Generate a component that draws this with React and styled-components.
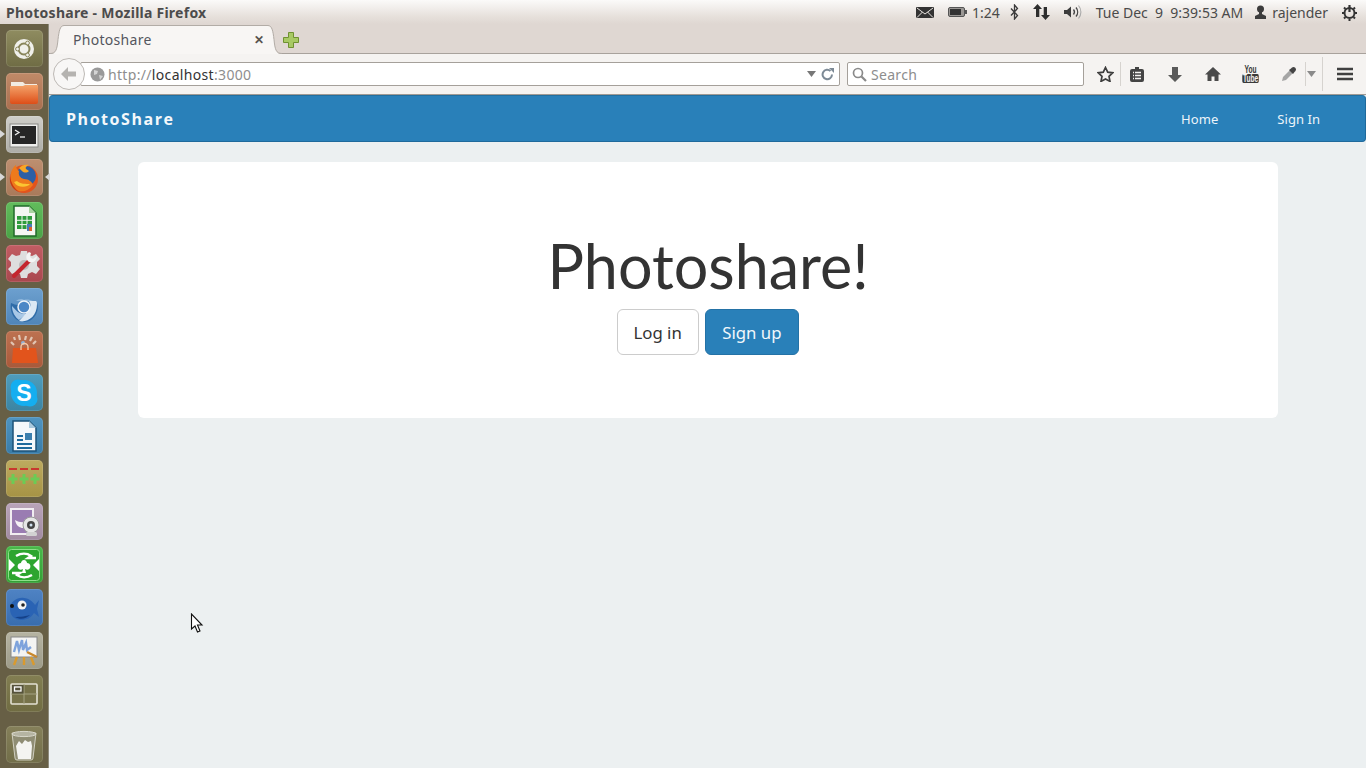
import React from 'react';
import styled, { createGlobalStyle } from 'styled-components';

const GlobalStyle = createGlobalStyle`
  html, body { margin: 0; padding: 0; height: 768px; overflow: hidden; background: #ecf0f1; }
  #root { height: 768px; }
  * { box-sizing: border-box; }
`;

const Screen = styled.div`
  position: relative;
  width: 1366px;
  height: 768px;
  display: grid;
  grid-template-columns: 49px 1fr;
  grid-template-rows: 24px 1fr;
  overflow: hidden;
  font-family: "Open Sans", "Noto Sans", sans-serif;
`;

// Top panel
const TopPanel = styled.header`
  grid-column: span 2;
  display: flex;
  align-items: center;
  justify-content: space-between;
  padding: 0 8px 0 6px;
  background: linear-gradient(#fbfaf9, #e6e0db 70%, #dfd7d2);
  color: #4c4c4c;
`;

const WindowTitle = styled.div`
  font: bold 14px "Noto Sans", sans-serif;
  letter-spacing: 0.25px;
`;

const Indicators = styled.div`
  display: flex;
  align-items: center;
  font: 14px "Noto Sans", sans-serif;
  color: #4a4a4a;
`;

const Indicator = styled.span`
  display: flex;
  align-items: center;
  margin-left: ${({ $gap }) => $gap}px;
  white-space: nowrap;
`;

// Launcher
const Launcher = styled.nav`
  display: flex;
  flex-direction: column;
  align-items: center;
  gap: 6px;
  padding: 6px 6px 0 6px;
  background: #675f45;
  border-right: 1px solid #8d8a7b;
`;

const Tile = styled.div`
  position: relative;
  flex: none;
  width: 37px;
  height: 37px;
  margin-top: ${({ $push }) => $push || 0}px;
  border-radius: 5px;
  background: linear-gradient(${({ $color }) => $color}, ${({ $shade }) => $shade});
  box-shadow: inset 0 0 0 1px rgba(255, 255, 255, 0.12);
  display: flex;
  align-items: center;
  justify-content: center;
`;

const Pip = styled.span`
  position: absolute;
  top: 14px;
  ${({ $side }) => ($side === 'left' ? 'left: -6px;' : 'right: -7px;')}
  width: 0;
  height: 0;
  border-top: 4px solid transparent;
  border-bottom: 4px solid transparent;
  ${({ $side }) => ($side === 'left' ? 'border-left: 5px solid #d8d8d8;' : 'border-right: 5px solid #d8d8d8;')}
`;

const TileSvg = styled.svg`
  width: 34px;
  height: 34px;
  display: block;
`;

const launcherItems = [
  {
    color: '#8f8c60', shade: '#6f6c44',
    art: (
      <>
        <circle cx="17" cy="17" r="10" fill="#f0f0ea" />
        <circle cx="17" cy="17" r="5.500" fill="none" stroke="#88855a" strokeWidth="2" />
        <circle cx="10.500" cy="17" r="1.900" fill="#f0f0ea" stroke="#88855a" />
        <circle cx="20.500" cy="11" r="1.900" fill="#f0f0ea" stroke="#88855a" />
        <circle cx="20.500" cy="23" r="1.900" fill="#f0f0ea" stroke="#88855a" />
      </>
    ),
  },
  {
    color: '#c08a68', shade: '#a96f4f',
    art: (
      <>
        <path d="M4 7h12l2 2h12v5H4z" fill="#f3ece2" />
        <path d="M3 11h13l2-1h13v17a2 2 0 0 1-2 2H5a2 2 0 0 1-2-2z" fill="url(#folder)" />
        <defs>
          <linearGradient id="folder" x1="0" y1="0" x2="0" y2="1">
            <stop offset="0" stopColor="#f4a36a" />
            <stop offset="1" stopColor="#dd4e18" />
          </linearGradient>
        </defs>
      </>
    ),
  },
  {
    color: '#cfcec9', shade: '#aeada7', left: true,
    art: (
      <>
        <rect x="3" y="6" width="28" height="23" fill="#eeeeec" stroke="#8a8a86" />
        <rect x="5" y="8" width="24" height="18" fill="#262626" />
        <path d="M8 12l4 2.500-4 2.500" fill="none" stroke="#eee" strokeWidth="1.300" />
        <path d="M13 19h5" stroke="#eee" strokeWidth="1.300" />
      </>
    ),
  },
  {
    color: '#bd8f70', shade: '#a97a5a', left: true, right: true,
    art: (
      <>
        <circle cx="17" cy="18" r="14" fill="#e2531c" />
        <circle cx="19" cy="15" r="10" fill="#2c5fa6" />
        <path d="M12 7c3-3 6-4 10-3-3 1-4 3-3 4l3 2c-2 2-5 2-7 0z" fill="#f7a626" />
        <path d="M4 13c0-3 2-7 5-9 0 3 1 5 3 6-1 4 1 7 5 8 5 0 8 3 9 6-5 7-13 8-18 4C4 25 3 19 4 13z" fill="#ee7a1c" />
        <path d="M10 20c3 3 9 3 13 3-3 4-13 4-16-2z" fill="#fbc531" />
        <path d="M3 15c-1 7 2 13 9 16-5-4-8-9-9-16z" fill="#c93a14" />
      </>
    ),
  },
  {
    color: '#62bc5c', shade: '#4aa246',
    art: (
      <>
        <path d="M7 2h15l7 7v23H7z" fill="#f4f7f2" stroke="#1f6b2a" strokeWidth="1.500" />
        <path d="M22 2v7h7z" fill="#a8d4a0" />
        <rect x="10" y="12" width="15" height="13" fill="#2e9b3c" />
        <path d="M10 16.300h15M10 20.600h15M15 12v13M20 12v13" stroke="#f4f7f2" strokeWidth="1" />
        <rect x="20" y="20" width="5" height="7" fill="#4a7ab8" />
        <rect x="22" y="23" width="3" height="4" fill="#d9622b" />
      </>
    ),
  },
  {
    color: '#c25d63', shade: '#a9474e',
    art: (
      <>
        <path d="M14 4h6l1 4 4 1 4-2 4 5-3 3v4l3 3-4 5-4-2-4 2-1 4h-6l-1-4-4-2-4 2-4-5 3-3v-4L1 12l4-5 4 2 4-1z" fill="#dedede" />
        <circle cx="17" cy="18" r="5" fill="#bcbcbc" />
        <path d="M7 29L23 13" stroke="#c4262e" strokeWidth="4" strokeLinecap="round" />
        <path d="M22 5a6 6 0 0 0 0 10 6 6 0 0 0 8-6l-4 3-3-2 1-4z" fill="#f4f4f4" />
      </>
    ),
  },
  {
    color: '#6da0cf', shade: '#4f85b8',
    art: (
      <>
        <path d="M4 13c6 3 9 2 13 0h13c3 8-3 19-13 19C9 32 2 24 4 13z" fill="#2f6ca8" />
        <path d="M12 30c-4-3-7-8-7-14 3 3 5 6 8 7 3 2 7 1 9-1z" fill="#a8c8e6" />
        <path d="M12 31c8 2 18-4 18-17 0-1 0-2-1-3h-7c2 3 2 6 0 9z" fill="#dbe8f4" />
        <path d="M9 11c2-2 6-3 8-1 3-1 7 0 9 1H14z" fill="#8fb7dc" />
        <circle cx="17" cy="17" r="6" fill="#4b87c6" stroke="#edf3f9" strokeWidth="1.500" />
      </>
    ),
  },
  {
    color: '#bd7251', shade: '#a8593a',
    art: (
      <>
        <path d="M7 4l1 3M12 2l1 5M19 3l-1 4M25 4l-2 4M29 8l-3 3M4 9l3 3" stroke="#ecdccd" strokeWidth="2.200" opacity="0.8" />
        <circle cx="16" cy="10" r="2" fill="#8fb4d8" />
        <path d="M6 15h23l2 15H5z" fill="#e2541c" />
        <path d="M14 17v-3a3.500 3.500 0 0 1 7 0v3" fill="none" stroke="#f7c9a5" strokeWidth="1.300" />
      </>
    ),
  },
  {
    color: '#4f9dbc', shade: '#3b84a2',
    art: (
      <>
        <circle cx="11" cy="11" r="7.500" fill="#15aef0" />
        <circle cx="23" cy="23" r="7.500" fill="#15aef0" />
        <circle cx="17" cy="17" r="13" fill="#15aef0" />
        <text x="17" y="25" textAnchor="middle" fontFamily="Liberation Sans" fontWeight="bold" fontSize="23" fill="#fff">S</text>
      </>
    ),
  },
  {
    color: '#4f94c0', shade: '#397ca8',
    art: (
      <>
        <path d="M6 2h16l7 7v23H6z" fill="#f5f8fb" stroke="#1d5278" strokeWidth="1.500" />
        <path d="M22 2v7h7z" fill="#a9c9de" />
        <path d="M10 17h6M10 21h6M10 25h15M10 29h15" stroke="#1f6a9c" strokeWidth="2" />
        <rect x="18" y="14" width="7" height="7" fill="#3c7fae" />
      </>
    ),
  },
  {
    color: '#bdaa5f', shade: '#a69345',
    art: (
      <>
        <path d="M2 7h8M13 7h8M24 7h8" stroke="#c8372e" strokeWidth="2.200" />
        <path d="M6 12v10M1.500 17h9M17 12v10M12.500 17h9M28 12v10M23.500 17h9" stroke="#6ccb55" strokeWidth="3" />
      </>
    ),
  },
  {
    color: '#b9a4b9', shade: '#a18ba1',
    art: (
      <>
        <rect x="3" y="3" width="24" height="27" fill="#f1edf1" />
        <rect x="5" y="5" width="20" height="23" fill="#9a7cb2" />
        <path d="M8 15c5 3 10 3 15 0-1 6-4 8-7 8s-7-2-8-8z" fill="#f5f0f5" />
        <circle cx="24" cy="20" r="8" fill="#e6e6e6" stroke="#999" />
        <circle cx="24" cy="20" r="4" fill="#444" />
        <circle cx="24" cy="20" r="1.500" fill="#cfe0ef" />
        <rect x="19" y="27" width="11" height="4" rx="1.500" fill="#d2d2d2" />
      </>
    ),
  },
  {
    color: '#4aba4a', shade: '#33a035',
    art: (
      <>
        <rect x="1.500" y="1.500" width="31" height="31" rx="3" fill="#2da52f" stroke="#8ede8a" />
        <path d="M17 12c-2 0-3 2-3 3-3 0-4 3-3 5s3 2 5 1l-1 4h4l-1-4c2 1 4 1 5-1s0-5-3-5c0-1-1-3-3-3z" fill="#fff" />
        <path d="M9 8c5-3 11-3 15 0l-3 2h8M25 27c-5 3-11 3-15 0l3-2H5" fill="none" stroke="#fff" strokeWidth="2.400" />
        <path d="M2 11l6 6-6 6zM32 11l-6 6 6 6z" fill="#fff" />
      </>
    ),
  },
  {
    color: '#4f83c4', shade: '#386dae',
    art: (
      <>
        <path d="M3 18c0-8 8-12 14-11 5 0 9 4 11 7l4-5-2 9 2 8-5-4c-3 5-8 7-13 7-6 0-11-4-11-11z" fill="#2a63b4" />
        <path d="M8 26c5 3 11 2 15-2-3 1-10 2-15 2z" fill="#15428a" />
        <circle cx="15" cy="14" r="4.500" fill="#f3f3f3" />
        <circle cx="16" cy="14" r="1.800" fill="#222" />
        <circle cx="5" cy="15" r="2" fill="#111" />
      </>
    ),
  },
  {
    color: '#b6b4a2', shade: '#9d9b88',
    art: (
      <>
        <rect x="4" y="3" width="26" height="20" fill="#f4f4f2" stroke="#888" />
        <path d="M7 18l3-11 2 9 3-10 1 10 3-7 1 7 4-3" fill="none" stroke="#7ea3dc" strokeWidth="2.400" />
        <path d="M20 18l10 5" stroke="#c9882c" strokeWidth="2.400" />
        <path d="M10 23l-3 8M17 23v8M24 23l3 8" stroke="#d99a2e" strokeWidth="2.400" />
      </>
    ),
  },
  {
    color: '#827e52', shade: '#706c42',
    art: (
      <>
        <rect x="4" y="7" width="26" height="20" rx="1" fill="#77734a" stroke="#e3e1d2" strokeWidth="1.600" />
        <path d="M17 7v20M4 17h26" stroke="#a5a382" />
        <rect x="5" y="8" width="11.500" height="8.500" fill="#55523a" />
        <rect x="7.500" y="10" width="6.500" height="4" fill="none" stroke="#fff" strokeWidth="1.300" />
      </>
    ),
  },
  {
    color: '#85805a', shade: '#716d48', push: 8,
    art: (
      <>
        <path d="M5 5h24l-3 25a2 2 0 0 1-2 2H10a2 2 0 0 1-2-2z" fill="#8f8d74" stroke="#d0cfc0" />
        <ellipse cx="17" cy="6" rx="12" ry="2.600" fill="#b5b4a2" stroke="#d8d7ca" />
        <path d="M9 18l3-5 3 3 3-4 3 2 3-1 1 5-1 13H11z" fill="#f4f4f1" />
      </>
    ),
  },
];

// Browser chrome
const Browser = styled.main`
  display: flex;
  flex-direction: column;
  min-width: 0;
`;

const TabStrip = styled.div`
  flex: none;
  height: 30px;
  display: flex;
  align-items: flex-end;
  padding-left: 1px;
  background: #dfd7d2;
  border-bottom: 1px solid #a8a29c;
`;

const TabFlare = styled.svg`
  flex: none;
  width: 14px;
  height: 29px;
  margin-bottom: -1px;
  display: block;
`;

const Tab = styled.div`
  width: 204px;
  height: 29px;
  margin-bottom: -1px;
  display: flex;
  align-items: center;
  justify-content: space-between;
  padding: 0 4px 1px 9px;
  background: #f8f6f4;
  border-top: 1px solid #b2aca6;
  font: 14px "Noto Sans", sans-serif;
  letter-spacing: 0.3px;
  color: #54565e;
`;

const TabClose = styled.span`
  font: bold 12px "Liberation Sans", sans-serif;
  color: #57534e;
`;

const NewTab = styled.svg`
  width: 18px;
  height: 18px;
  margin-bottom: 4px;
  display: block;
`;

const Toolbar = styled.div`
  flex: none;
  height: 41px;
  display: flex;
  align-items: center;
  padding: 0 0 0 4px;
  background: #f5f3f1;
  border-bottom: 1px solid #a09a94;
`;

const BackButton = styled.div`
  position: relative;
  z-index: 1;
  flex: none;
  width: 32px;
  height: 32px;
  margin-right: -5px;
  border-radius: 50%;
  background: #f8f7f6;
  border: 1px solid #bdb9b5;
  display: flex;
  align-items: center;
  justify-content: center;
`;

const Field = styled.div`
  flex: none;
  width: ${({ $width }) => $width}px;
  height: 24px;
  margin-left: ${({ $gap }) => $gap || 0}px;
  display: flex;
  align-items: center;
  background: #fff;
  border: 1px solid #a5a09a;
  border-radius: 2px;
  font: 14px "Noto Sans", sans-serif;
`;

const Url = styled.span`
  flex: 1;
  margin-left: 3px;
  font-size: 14px;
  letter-spacing: 0.33px;
  color: #8e8e8e;
  b { font-weight: 400; color: #333; }
`;

const SearchText = styled.span`
  margin-left: 4px;
  letter-spacing: 0.3px;
  color: #8d8d8d;
`;

const Spacer = styled.span`
  flex: none;
  width: ${({ $width }) => $width}px;
`;

const ToolIcons = styled.div`
  display: flex;
  align-items: center;
  margin-left: 10px;
`;

const ToolSlot = styled.span`
  flex: none;
  width: ${({ $width }) => $width}px;
  height: ${({ $tall }) => ($tall ? 34 : 24)}px;
  display: flex;
  align-items: center;
  justify-content: ${({ $start }) => ($start ? 'flex-start' : 'center')};
  padding-right: ${({ $pad }) => $pad || 0}px;
  border-right: ${({ $rule }) => ($rule ? '1px solid #d6d3cf' : 'none')};
`;

const InnerRule = styled.span`
  width: 1px;
  height: 24px;
  margin-right: 1px;
  background: #d6d3cf;
`;

const YouTube = styled.span`
  display: flex;
  flex-direction: column;
  align-items: center;
  transform: scaleX(0.66);
  font: bold 10px/9px "Liberation Sans", sans-serif;
  color: #333;
`;

const Tube = styled.span`
  padding: 0 1px;
  background: #3a3a3a;
  color: #f5f3f1;
  border-radius: 2px;
`;

// Page
const Content = styled.div`
  flex: 1;
  display: flex;
  flex-direction: column;
  background: #ecf0f1;
`;

const NavBar = styled.div`
  flex: none;
  height: 47px;
  display: flex;
  align-items: center;
  justify-content: space-between;
  padding: 0 45px 0 16px;
  background: #2980b9;
  border: 1px solid #1f6a9c;
  border-top-color: #226f9f;
  border-radius: 4px;
`;

const Brand = styled.a`
  padding-top: 1px;
  font: bold 16px "Open Sans", sans-serif;
  letter-spacing: 1.55px;
  color: #f4f8fb;
`;

const NavLinks = styled.div`
  display: flex;
  gap: 59px;
`;

const NavLink = styled.a`
  font: 13px "Noto Sans", sans-serif;
  letter-spacing: 0.05px;
  color: #ecf4fa;
`;

const Jumbotron = styled.section`
  width: 1140px;
  height: 256px;
  margin: 20px 0 0 89px;
  padding-top: 64px;
  background: #fff;
  border-radius: 6px;
  display: flex;
  flex-direction: column;
  align-items: center;
`;

const Title = styled.h1`
  margin: 0;
  height: 83px;
  font: 400 61px/79px "Lato", sans-serif;
  color: #333;
`;

const Actions = styled.div`
  display: flex;
  gap: 6px;
`;

const Button = styled.a`
  height: 46px;
  padding: 0 ${({ $primary }) => ($primary ? 16.7 : 15.7)}px;
  display: flex;
  align-items: center;
  border-radius: 6px;
  font: 16.8px "Noto Sans", sans-serif;
  background: ${({ $primary }) => ($primary ? '#2980b9' : '#fff')};
  color: ${({ $primary }) => ($primary ? '#f1f7fb' : '#333')};
  border: 1px solid ${({ $primary }) => ($primary ? '#2472a6' : '#ccc')};
`;

const Cursor = styled.svg`
  position: absolute;
  left: 190px;
  top: 613px;
  width: 14px;
  height: 22px;
`;

const Glyph = ({ w = 16, h = 16, children }) => (
  <svg width={w} height={h} viewBox={`0 0 ${w} ${h}`} style={{ display: 'block' }}>{children}</svg>
);

export default function App() {
  return (
    <Screen>
      <GlobalStyle />
      <TopPanel>
        <WindowTitle>Photoshare - Mozilla Firefox</WindowTitle>
        <Indicators>
          <Indicator>
            <Glyph w={18} h={13}>
              <rect y="1" width="18" height="11" rx="1" fill="#333" />
              <path d="M1 2l8 6 8-6M1 11.500l5.500-5.500M17 11.500L11.500 6" fill="none" stroke="#e8e4e0" strokeWidth="1" />
            </Glyph>
          </Indicator>
          <Indicator $gap={14}>
            <Glyph w={19} h={12}>
              <rect x="0.500" y="1.500" width="16" height="9" rx="1.500" fill="#9a9794" stroke="#555" />
              <rect x="2" y="3" width="11" height="6" fill="#333" />
              <rect x="17" y="4" width="2" height="4" fill="#555" />
            </Glyph>
          </Indicator>
          <Indicator $gap={5}>1:24</Indicator>
          <Indicator $gap={10}>
            <Glyph w={9} h={16}>
              <path d="M1 4.500l6.500 7L4.500 15V1l3 3.500-6.500 7" fill="none" stroke="#3a3a3a" strokeWidth="1.300" />
            </Glyph>
          </Indicator>
          <Indicator $gap={14}>
            <Glyph w={17} h={16}>
              <path d="M4.500 0L9 5H6.300v8H3V5H0z" fill="#2e2e2e" />
              <path d="M12.500 16L8 11h2.700V3H14v8h3z" fill="#2e2e2e" />
            </Glyph>
          </Indicator>
          <Indicator $gap={14}>
            <Glyph w={19} h={16}>
              <path d="M0 6h3l4-3.500v11L3 10H0z" fill="#3c3c3c" />
              <path d="M9.500 5.500a4 4 0 0 1 0 5M12 3.500a7 7 0 0 1 0 9" fill="none" stroke="#444" strokeWidth="1.300" />
              <path d="M14.500 1.500a10 10 0 0 1 0 13" fill="none" stroke="#aaa" strokeWidth="1.100" />
            </Glyph>
          </Indicator>
          <Indicator $gap={13}>Tue Dec&nbsp; 9&nbsp; 9:39:53 AM</Indicator>
          <Indicator $gap={11}>
            <Glyph w={13} h={14}>
              <circle cx="6.500" cy="4" r="3.500" fill="#3c3c3c" />
              <path d="M5 7h3v2l4 2v3H1v-3l4-2z" fill="#3c3c3c" />
            </Glyph>
          </Indicator>
          <Indicator $gap={5}>rajender</Indicator>
          <Indicator $gap={13}>
            <Glyph w={17} h={17}>
              <circle cx="8.500" cy="9" r="5" fill="none" stroke="#333" strokeWidth="2" />
              <path d="M8.500 1v7" stroke="#333" strokeWidth="2.200" />
              <path d="M1 9h2M14 9h2M3 3.500l1.500 1.500M14 3.500L12.500 5M3 14.500L4.500 13M14 14.500L12.500 13M8.500 15v2" stroke="#333" strokeWidth="2" />
            </Glyph>
          </Indicator>
        </Indicators>
      </TopPanel>

      <Launcher>
        {launcherItems.map((item, i) => (
          <Tile key={i} $color={item.color} $shade={item.shade} $push={item.push}>
            {item.left && <Pip $side="left" />}
            {item.right && <Pip $side="right" />}
            <TileSvg viewBox="0 0 34 34">{item.art}</TileSvg>
          </Tile>
        ))}
      </Launcher>

      <Browser>
        <TabStrip>
          <TabFlare viewBox="0 0 14 29">
            <path d="M0 29c6 0 7-4 8-14C9 6 10 1 14 1v28z" fill="#f8f6f4" />
            <path d="M0 28.500c6 0 7-4 8-14C9 6 10 .5 14 .5" fill="none" stroke="#b2aca6" />
          </TabFlare>
          <Tab>
            Photoshare
            <TabClose>✕</TabClose>
          </Tab>
          <TabFlare viewBox="0 0 14 29">
            <path d="M14 29c-6 0-7-4-8-14C5 6 4 1 0 1v28z" fill="#f8f6f4" />
            <path d="M14 28.500c-6 0-7-4-8-14C5 6 4 .5 0 .5" fill="none" stroke="#b2aca6" />
          </TabFlare>
          <NewTab viewBox="0 0 18 18">
            <path d="M6.500 1.500h5v5h5v5h-5v5h-5v-5h-5v-5h5z" fill="#a8c964" stroke="#6f9130" />
          </NewTab>
        </TabStrip>
        <Toolbar>
          <BackButton>
            <Glyph w={16} h={14}>
              <path d="M7 0L0 7l7 7V9.500h8v-5H7z" fill="#b5b3b0" />
            </Glyph>
          </BackButton>
          <Field $width={760}>
            <Spacer $width={9} />
            <Glyph w={15} h={15}>
              <circle cx="7.500" cy="7.500" r="7" fill="#9a9a9a" />
              <path d="M4 3l4 1-1 3-3 1zM9 8l4 1-3 4z" fill="#d4d4d4" />
            </Glyph>
            <Url>http://<b>localhost</b>:3000</Url>
            <Glyph w={9} h={6}><path d="M0 0h9L4.500 6z" fill="#777" /></Glyph>
            <Spacer $width={5} />
            <Glyph w={13} h={13}>
              <path d="M11 6.500A4.700 4.700 0 1 1 9.500 3" fill="none" stroke="#7d8a96" strokeWidth="2" />
              <path d="M8 0h5v5z" fill="#7d8a96" />
            </Glyph>
            <Spacer $width={5} />
          </Field>
          <Field $width={237} $gap={7}>
            <Spacer $width={4} />
            <Glyph w={15} h={15}>
              <circle cx="6" cy="6" r="4.500" fill="none" stroke="#8a8a8a" strokeWidth="1.700" />
              <path d="M9.500 9.500l4.500 4.500" stroke="#8a8a8a" strokeWidth="2.200" />
            </Glyph>
            <SearchText>Search</SearchText>
          </Field>
          <ToolIcons>
            <ToolSlot $width={27} $pad={3} $rule>
              <Glyph w={17} h={16}>
                <path d="M8.500 1.500l2.200 4.700 5 .6-3.700 3.500 1 5.100-4.500-2.500-4.500 2.500 1-5.100L1.300 6.800l5-.6z" fill="none" stroke="#3e3e3e" strokeWidth="1.700" />
              </Glyph>
            </ToolSlot>
            <ToolSlot $width={32}>
              <Glyph w={14} h={16}>
                <path d="M5 1h4v2h3a2 2 0 0 1 2 2v9a2 2 0 0 1-2 2H2a2 2 0 0 1-2-2V5a2 2 0 0 1 2-2h3z" fill="#444" />
                <path d="M5 6.500h6M5 9.500h6M5 12.500h6M3 6.500h1M3 9.500h1M3 12.500h1" stroke="#f5f3f1" strokeWidth="1.300" />
              </Glyph>
            </ToolSlot>
            <ToolSlot $width={44}>
              <Glyph w={14} h={15}>
                <path d="M4 0h6v8h4l-7 7-7-7h4z" fill="#5a5a5a" />
              </Glyph>
            </ToolSlot>
            <ToolSlot $width={32}>
              <Glyph w={16} h={14}>
                <path d="M8 0L0 7.500h2.500V14h4V9.500h3V14h4V7.500H16z" fill="#4a4a4a" />
              </Glyph>
            </ToolSlot>
            <ToolSlot $width={44}>
              <YouTube>You<Tube>Tube</Tube></YouTube>
            </ToolSlot>
            <ToolSlot $width={32}>
              <Glyph w={16} h={16}>
                <path d="M9 4L2 11l-1 4 4-1 7-7z" fill="#a5a5a5" />
                <path d="M8 4l4 4 1.500-2 1-1a2.500 2.500 0 0 0-3.500-3.500l-1 1z" fill="#444" />
              </Glyph>
            </ToolSlot>
            <ToolSlot $width={18} $start $rule $tall>
              <InnerRule />
              <Glyph w={9} h={6}><path d="M0 0h9L4.500 6z" fill="#8a8a8a" /></Glyph>
            </ToolSlot>
            <ToolSlot $width={44}>
              <Glyph w={16} h={14}>
                <path d="M0 2h16M0 7h16M0 12h16" stroke="#404040" strokeWidth="2.400" />
              </Glyph>
            </ToolSlot>
          </ToolIcons>
        </Toolbar>

        <Content>
          <NavBar>
            <Brand>PhotoShare</Brand>
            <NavLinks>
              <NavLink>Home</NavLink>
              <NavLink>Sign In</NavLink>
            </NavLinks>
          </NavBar>
          <Jumbotron>
            <Title>Photoshare!</Title>
            <Actions>
              <Button>Log in</Button>
              <Button $primary>Sign up</Button>
            </Actions>
          </Jumbotron>
        </Content>
      </Browser>

      <Cursor viewBox="0 0 14 22">
        <path d="M1.500 1v15l3.500-3 2.500 6 2.500-1-2.500-6h4.500z" fill="#fff" stroke="#111" strokeWidth="1.100" />
      </Cursor>
    </Screen>
  );
}
